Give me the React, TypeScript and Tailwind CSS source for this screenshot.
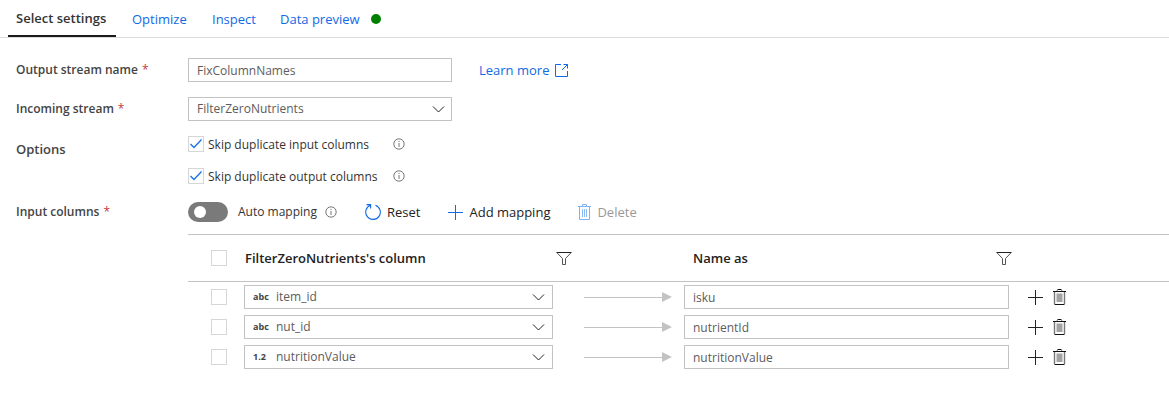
import React, { useState } from "react";

const Chevron = () => (
  <svg aria-hidden="true" width="14" height="8" viewBox="0 0 14 8" className="pointer-events-none absolute inset-y-0 right-1.5 my-auto" fill="none" stroke="#222" strokeWidth="1">
    <path d="M1 1.5 L6.5 7 L12 1.5" />
  </svg>
);

const Info = () => (
  <button type="button" aria-label="More information" className="block">
    <svg width="12" height="12" viewBox="0 0 12 12" fill="none" stroke="#666" strokeWidth="0.9">
      <circle cx="6" cy="6" r="5.2" />
      <path d="M6 5v4M6 2.9v1.1" />
    </svg>
  </button>
);

const Funnel = () => (
  <svg width="16" height="15" viewBox="0 0 16 15" fill="none" stroke="#555" strokeWidth="1">
    <path d="M0.5 1.5 H15.5" stroke="#222" />
    <path d="M1 1.8 L6.5 7.5 V13.5 H9.5 V7.5 L15 1.8" />
  </svg>
);

const Plus = () => (
  <svg width="15" height="15" viewBox="0 0 15 15" fill="none" stroke="currentColor" strokeWidth="1">
    <path d="M0 7.5H15M7.5 0V15" />
  </svg>
);

const TrashLight = () => (
  <svg width="13" height="16" viewBox="0 0 13 16" fill="none" stroke="currentColor">
    <path d="M0 2.5H13" />
    <path d="M4.5 2.5V0.5H8.5V2.5" />
    <path d="M1.5 2.5V15.5H11.5V2.5" />
    <path d="M4.5 5V13M6.5 5V13M8.5 5V13" strokeWidth="0.9" />
  </svg>
);

const Trash = () => (
  <svg width="13" height="16" viewBox="0 0 13 16" fill="none">
    <path d="M3.5 4.5H9.5V13H3.5Z" fill="#a3a3a3" />
    <path d="M1.5 3V15M11.5 3V15" stroke="#777" strokeWidth="1.4" />
    <path d="M4.2 2.5V1M8.8 2.5V1" stroke="#777" />
    <path d="M0 2.5H13M4.5 0.5H8.5M1.5 15.5H11.5" stroke="#111" />
  </svg>
);

const Reset = () => (
  <svg width="16" height="16" viewBox="0 0 16 16" fill="none" stroke="currentColor" strokeWidth="1.1">
    <path d="M10.4 1.2A7.3 7.3 0 1 1 5.4 1.3" />
    <path d="M1.5 0.6H5.6V4.6" />
  </svg>
);

const ExternalLink = () => (
  <svg width="13" height="13" viewBox="0 0 13 13" fill="none" stroke="currentColor" strokeWidth="1">
    <path d="M6 0.5H0.5V12.5H12.5V7" />
    <path d="M8.5 0.5H12.5V4.5M12.5 0.5L7 6" />
  </svg>
);

function Check({ id, label, initial = false }: { id?: string; label?: string; initial?: boolean }) {
  const [on, setOn] = useState(initial);
  return (
    <span className="relative block h-4 w-4 shrink-0">
      <input
        type="checkbox"
        id={id}
        aria-label={label}
        checked={on}
        onChange={() => setOn(!on)}
        className="block h-4 w-4 appearance-none border border-[#d6d6d6] bg-white"
      />
      {on && (
        <svg aria-hidden="true" width="16" height="16" viewBox="0 0 16 16" className="pointer-events-none absolute inset-0" fill="none" stroke="#1a73e8" strokeWidth="1.3">
          <path d="M2.5 8 L6 11.5 L13.5 3.5" />
        </svg>
      )}
    </span>
  );
}

function Label({ text, htmlFor, required = false }: { text: string; htmlFor: string; required?: boolean }) {
  return (
    <label htmlFor={htmlFor} className="w-[172px] shrink-0 text-xs leading-5 font-semibold text-[#444]">
      {text}
      {required && <span className="ml-1 font-normal text-[#c4383f]">*</span>}
    </label>
  );
}

function Option({ id, text }: { id: string; text: string }) {
  return (
    <div className="flex items-start text-xs leading-[18px]">
      <Check id={id} initial />
      <label htmlFor={id} className="w-[189px] whitespace-nowrap pl-1">{text}</label>
      <div className="pt-0.5"><Info /></div>
    </div>
  );
}

const rows = [
  { type: "abc", column: "item_id", name: "isku" },
  { type: "abc", column: "nut_id", name: "nutrientId" },
  { type: "1.2", column: "nutritionValue", name: "nutritionValue" },
];

const field = "block h-6 w-full appearance-none rounded-none border border-[#c3c3c3] bg-white px-2 text-xs text-[#5c5c5c] outline-none";

export default function App() {
  const [auto, setAuto] = useState(false);
  return (
    <main className="relative bg-white font-['Open_Sans',sans-serif] text-[13px] leading-5 text-[#333]">
      <nav className="flex h-[38px] border-b border-[#dcdcdc] pl-2 text-[#1169e6]">
        <button type="button" className="w-[108px] whitespace-nowrap border-b-2 border-[#1b1b1b] px-2 text-left font-semibold text-[#333]">Select settings</button>
        <button type="button" className="w-[80px] whitespace-nowrap pl-4 text-left">Optimize</button>
        <button type="button" className="w-[68px] whitespace-nowrap pl-4 text-left">Inspect</button>
        <button type="button" className="flex items-center gap-[11px] whitespace-nowrap pl-4">
          Data preview
          <span className="h-2.5 w-2.5 rounded-full bg-[#008000]" />
        </button>
      </nav>

      <form className="pl-4 pt-5" onSubmit={(e) => e.preventDefault()}>
        <div className="flex items-center">
          <Label text="Output stream name" htmlFor="output" required />
          <div className="w-[264px]">
            <input id="output" defaultValue="FixColumnNames" className={field} />
          </div>
          <a href="#learn" className="ml-[27px] flex items-center gap-1.5 text-[#1169e6]">
            Learn more <ExternalLink />
          </a>
        </div>

        <div className="mt-[15px] flex items-center">
          <Label text="Incoming stream" htmlFor="incoming" required />
          <div className="relative w-[264px]">
            <select id="incoming" className={field}>
              <option>FilterZeroNutrients</option>
            </select>
            <Chevron />
          </div>
        </div>

        <div role="group" aria-labelledby="options" className="mt-3 flex items-start">
          <span id="options" className="w-[172px] shrink-0 pt-1.5 font-semibold text-[#444]">Options</span>
          <div className="flex flex-col gap-3.5 pt-[3px]">
            <Option id="skip-input" text="Skip duplicate input columns" />
            <Option id="skip-output" text="Skip duplicate output columns" />
          </div>
        </div>

        <div className="mt-4 flex items-center">
          <Label text="Input columns" htmlFor="auto" required />
          <button
            id="auto"
            type="button"
            role="switch"
            aria-checked={auto}
            onClick={() => setAuto(!auto)}
            className="flex h-5 w-10 items-center rounded-full bg-[#7a7a7a] px-1.5"
          >
            <span className={auto ? "ml-auto h-3 w-3 rounded-full bg-white" : "h-3 w-3 rounded-full bg-white"} />
          </button>
          <span className="w-[97px] whitespace-nowrap pl-2.5 text-xs">Auto mapping</span>
          <Info />
          <div className="flex items-center gap-7 pl-7">
            <button type="button" className="flex items-center gap-1.5 text-[#222]">
              <span className="text-[#1169e6]"><Reset /></span>Reset
            </button>
            <button type="button" className="flex items-center gap-1.5 text-[#222]">
              <span className="text-[#1169e6]"><Plus /></span>Add mapping
            </button>
            <button type="button" disabled className="flex items-center gap-1.5 text-[#999]">
              <span className="text-[#7fb0f2]"><TrashLight /></span>Delete
            </button>
          </div>
        </div>

        <div className="mt-3 pl-[172px]">
          <table className="w-full table-fixed border-separate border-spacing-0">
            <colgroup>
              <col className="w-14" />
              <col />
              <col className="w-28" />
              <col />
              <col className="w-[157px]" />
            </colgroup>
            <thead>
              <tr className="h-12 text-left text-[#222] [&>th]:border-y [&>th]:border-[#c3c3c3] [&>th]:font-semibold [&>th]:p-0">
                <th><div className="pl-[23px]"><Check label="Select all" /></div></th>
                <th>
                  <div className="flex items-center justify-between pl-px">
                    FilterZeroNutrients's column
                    <button type="button" aria-label="Filter columns"><Funnel /></button>
                  </div>
                </th>
                <th />
                <th>
                  <div className="flex items-center justify-between pl-[9px]">
                    Name as
                    <button type="button" aria-label="Filter names"><Funnel /></button>
                  </div>
                </th>
                <th />
              </tr>
            </thead>
            <tbody>
              {rows.map((r) => (
                <tr key={r.column} className="h-[30px] [&>td]:p-0">
                  <td><div className="pl-[23px]"><Check label={"Select " + r.column} /></div></td>
                  <td>
                    <div className="mr-[19px] flex h-6 items-center border border-[#c3c3c3] pl-2">
                      <span className="w-[23px] text-[9px] font-bold leading-4 text-[#444]">{r.type}</span>
                      <div className="relative h-full flex-1">
                        <select aria-label="Column" className="block h-full w-full appearance-none bg-transparent text-xs text-[#5c5c5c] outline-none">
                          <option>{r.column}</option>
                        </select>
                        <Chevron />
                      </div>
                    </div>
                  </td>
                  <td>
                    <div className="flex items-center px-3">
                      <div className="h-px flex-1 bg-[#c3c3c3]" />
                      <svg width="10" height="10" viewBox="0 0 10 10" fill="#c3c3c3"><path d="M0 0L10 5L0 10Z" /></svg>
                    </div>
                  </td>
                  <td>
                    <div className="pr-[3px]">
                      <input aria-label="Name as" defaultValue={r.name} className={field} />
                    </div>
                  </td>
                  <td>
                    <div className="flex items-center gap-2.5 pl-4 text-[#222]">
                      <button type="button" aria-label="Add"><Plus /></button>
                      <button type="button" aria-label="Delete"><Trash /></button>
                    </div>
                  </td>
                </tr>
              ))}
            </tbody>
          </table>
        </div>
      </form>
      <svg aria-hidden="true" width="4" height="4" viewBox="0 0 4 4" className="absolute left-[737px] top-[405px]">
        <path d="M0 0.5L3.5 4H0Z" fill="#222" />
      </svg>
    </main>
  );
}
